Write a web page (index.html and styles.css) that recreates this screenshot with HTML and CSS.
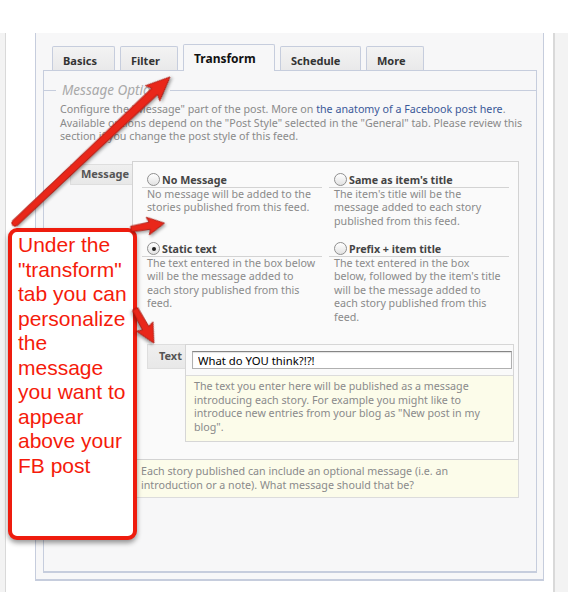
FILE: index.html
```html
<!DOCTYPE html>
<html>
<head>
<meta charset="utf-8">
<title>Transform tab</title>
<link rel="stylesheet" href="styles.css">
</head>
<body>
<div class="top-space"></div>
<div class="frame">
  <div class="gutter-left"></div>
  <div class="column">
    <div class="panel">
      <div class="tabs">
        <div class="tab tab-basics">Basics</div>
        <div class="tab tab-filter">Filter</div>
        <div class="tab tab-transform active">Transform</div>
        <div class="tab tab-schedule">Schedule</div>
        <div class="tab tab-more">More</div>
      </div>
      <div class="tab-body">
        <div class="legend"><span class="legend-text">Message Options</span></div>
        <p class="intro">Configure the "Message" part of the post. More on <a href="#">the anatomy of a Facebook post here</a>.<br>Available options depend on the "Post Style" selected in the "General" tab. Please review this<br>section if you change the post style of this feed.</p>
        <div class="form-row">
          <div class="field-label">Message</div>
          <div class="field">
            <div class="options">
              <div class="choices">
                <div class="choice">
                  <div class="choice-head"><span class="radio"></span>No Message</div>
                  <div class="choice-desc">No message will be added to the<br>stories published from this feed.</div>
                </div>
                <div class="choice">
                  <div class="choice-head"><span class="radio"></span>Same as item's title</div>
                  <div class="choice-desc">The item's title will be the<br>message added to each story<br>published from this feed.</div>
                </div>
                <div class="choice">
                  <div class="choice-head"><span class="radio checked"></span>Static text</div>
                  <div class="choice-desc">The text entered in the box below<br>will be the message added to<br>each story published from this<br>feed.</div>
                </div>
                <div class="choice">
                  <div class="choice-head"><span class="radio"></span>Prefix + item title</div>
                  <div class="choice-desc">The text entered in the box<br>below, followed by the item's title<br>will be the message added to<br>each story published from this<br>feed.</div>
                </div>
              </div>
              <div class="sub-row">
                <div class="field-label sub-label">Text</div>
                <div class="sub-field">
                  <div class="input-wrap"><input class="text-input" type="text" value="What do YOU think?!?!"></div>
                  <div class="note inner-note">The text you enter here will be published as a message<br>introducing each story. For example you might like to<br>introduce new entries from your blog as "New post in my<br>blog".</div>
                </div>
              </div>
            </div>
            <div class="note outer-note">Each story published can include an optional message (i.e. an<br>introduction or a note). What message should that be?</div>
          </div>
        </div>
      </div>
    </div>
  </div>
  <div class="gutter-right"></div>
</div>

<div class="callout">Under the<br>"transform"<br>tab you can<br>personalize<br>the<br>message<br>you want to<br>appear<br>above your<br>FB post</div>

<svg class="arrows" width="580" height="594" viewBox="0 0 580 594">
  <g class="arrow" transform="translate(15 223) rotate(-43.3)">
    <path d="M0 -3.2 L192 -4.2 L189 -10.5 L213 0 L189 10.5 L192 4.2 L0 3.2 A3.2 3.2 0 0 1 0 -3.2 Z"/>
  </g>
  <g class="arrow" transform="translate(131 229) rotate(-10)">
    <path d="M0 -2.8 Q10 -3.2 19 -3.6 L17 -9 L34 0 L17 9 L19 3.6 Q10 3.2 0 2.8 Z"/>
  </g>
  <g class="arrow" transform="translate(135 309) rotate(61)">
    <path d="M0 -3 L22 -3.6 L20 -9.5 L39 0 L20 9.5 L22 3.6 L0 3 Z"/>
  </g>
</svg>
</body>
</html>
```

FILE: styles.css
```css
html, body {
  margin: 0;
  padding: 0;
}
body {
  position: relative;
  width: 580px;
  min-height: 594px;
  background: #fff;
  font-family: "Noto Sans", "DejaVu Sans", sans-serif;
  font-size: 10.7px;
  color: #333;
}

.top-space {
  height: 33px;
}

.frame {
  display: flex;
  align-items: stretch;
}
.gutter-left {
  width: 5px;
  background: #f3f3f3;
}
.gutter-right {
  width: 13px;
  background: #f3f3f3;
}
.column {
  background: #fff;
  border-left: 1px solid #d9d9d9;
  border-right: 2px solid #d9d9d9;
  padding: 0 9px 11px 29px;
}

.panel {
  box-sizing: border-box;
  width: 509px;
  background: #f7f7f8;
  border: 1px solid #c6cddd;
  border-top: none;
  border-bottom-width: 2px;
  padding: 11px 6px 6px 7px;
}

/* tabs */
.tabs {
  display: flex;
  align-items: flex-end;
  gap: 5px;
  margin-left: 9px;
}
.tab {
  box-sizing: border-box;
  height: 24px;
  padding: 6px 0 0 10px;
  border: 1px solid #c6cddd;
  border-bottom: none;
  border-radius: 2px 2px 0 0;
  background: linear-gradient(#f3f3f3, #e9e9ea);
  font-size: 11px;
  font-weight: 700;
  color: #333;
  line-height: 15px;
  white-space: nowrap;
}
.tab-basics { width: 63px; }
.tab-filter { width: 58px; }
.tab-transform { width: 92px; }
.tab-schedule { width: 81px; }
.tab-more { width: 58px; }
.tab.active {
  position: relative;
  z-index: 1;
  height: 27px;
  margin-bottom: -1px;
  padding-top: 6px;
  background: #f7f7f8;
  color: #111;
  font-size: 12px;
  line-height: 16px;
}

.tab-body {
  border: 1px solid #c6cddd;
  border-bottom-width: 2px;
  background: #f7f7f8;
  padding: 10px 0 73px;
}

/* legend */
.legend {
  display: flex;
  align-items: center;
  height: 18px;
}
.legend::before {
  content: "";
  width: 12px;
  border-top: 1px solid #c6cddd;
}
.legend::after {
  content: "";
  flex: 1;
  border-top: 1px solid #c6cddd;
}
.legend-text {
  padding: 0 6px;
  font-style: italic;
  font-size: 13.5px;
  line-height: 18px;
  color: #a9a9a9;
}

.intro {
  margin: 4px 0 0 16px;
  line-height: 13.5px;
  color: #8a8a8a;
  white-space: nowrap;
}
.intro a {
  color: #3b5998;
  text-decoration: none;
}

/* form */
.form-row {
  display: grid;
  grid-template-columns: 62px 387px;
  align-items: start;
  margin: 17px 0 0 26px;
}
.field-label {
  box-sizing: border-box;
  margin-top: 3px;
  height: 21px;
  padding-right: 3px;
  background: linear-gradient(#efefef, #e8e8e8);
  border: 1px solid #dedede;
  border-right: none;
  text-align: right;
  font-size: 11px;
  font-weight: 700;
  color: #555;
  line-height: 18px;
}

.options {
  border: 1px solid #d3d3d3;
  background: #fafafa;
  padding: 11px 0 17px;
}
.choices {
  display: grid;
  grid-template-columns: 180px 180px;
  column-gap: 7px;
  row-gap: 13.5px;
  margin: 0 9px;
}
.choice-head {
  display: flex;
  align-items: center;
  height: 14px;
  padding-left: 5px;
  border-bottom: 1px solid #d3d3d3;
  font-weight: 700;
  color: #444;
  white-space: nowrap;
}
.radio {
  box-sizing: border-box;
  flex: none;
  display: flex;
  align-items: center;
  justify-content: center;
  width: 13px;
  height: 13px;
  margin-right: 2px;
  border: 1px solid #8f8f8f;
  border-radius: 50%;
  background: linear-gradient(#ffffff, #e2e2e2);
}
.radio.checked::after {
  content: "";
  width: 4px;
  height: 4px;
  border-radius: 50%;
  background: #222;
}
.choice-desc {
  padding-left: 5px;
  line-height: 13.5px;
  color: #8a8a8a;
  white-space: nowrap;
}

.sub-row {
  display: grid;
  grid-template-columns: 38px 1fr;
  align-items: start;
  margin: 20px 4px 0 14px;
}
.sub-label {
  margin-top: 0;
  height: 25px;
  line-height: 22px;
}
.sub-field {
  border: 1px solid #d6d6d6;
  background: #fafafa;
}
.input-wrap {
  padding: 6px 1px 6px 6px;
}
.text-input {
  display: block;
  box-sizing: border-box;
  width: 100%;
  height: 18px;
  margin: 0;
  padding: 0 5px;
  border: 1px solid #b0b0b0;
  border-top-color: #858585;
  background: #fff;
  box-shadow: inset 0 1px 1px rgba(0, 0, 0, 0.12);
  font-family: "Noto Sans", "DejaVu Sans", sans-serif;
  font-size: 11.3px;
  color: #000;
  outline: none;
}

.note {
  background: #fcfcea;
  color: #8a8a8a;
  line-height: 13.5px;
  white-space: nowrap;
}
.inner-note {
  border-top: 1px solid #dcdcdc;
  padding: 4px 8px 7px;
}
.outer-note {
  border: 1px solid #dcdcdc;
  border-top: none;
  padding: 5px 8px;
}

/* annotation overlay */
.callout {
  position: absolute;
  left: 8px;
  top: 228px;
  box-sizing: border-box;
  width: 129px;
  height: 312px;
  padding: 1px 0 0 6px;
  background: #fff;
  border: 4.5px solid #ee1c0e;
  border-radius: 9px;
  box-shadow: 0 3px 5px rgba(0, 0, 0, 0.4);
  font-family: "Liberation Sans", Arial, sans-serif;
  font-size: 21px;
  line-height: 24.5px;
  color: #f51b0b;
  white-space: nowrap;
}

.arrows {
  position: absolute;
  left: 0;
  top: 0;
  pointer-events: none;
  overflow: visible;
}
.arrow path {
  fill: #e9271a;
  stroke: #a8130a;
  stroke-width: 0.8;
  stroke-linejoin: round;
}
.arrow {
  filter: drop-shadow(1px 2px 1.5px rgba(0, 0, 0, 0.35));
}
```
